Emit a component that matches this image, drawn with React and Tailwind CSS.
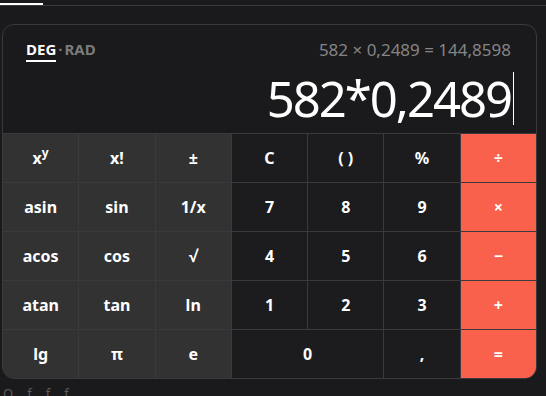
import React from "react";

const keys = [
  { t: "xy", k: "fn" },
  { t: "x!", k: "fn" },
  { t: "±", k: "fn" },
  { t: "C", k: "num" },
  { t: "( )", k: "num" },
  { t: "%", k: "num" },
  { t: "÷", k: "op" },
  { t: "asin", k: "fn" },
  { t: "sin", k: "fn" },
  { t: "1/x", k: "fn" },
  { t: "7", k: "num" },
  { t: "8", k: "num" },
  { t: "9", k: "num" },
  { t: "×", k: "op" },
  { t: "acos", k: "fn" },
  { t: "cos", k: "fn" },
  { t: "√", k: "fn" },
  { t: "4", k: "num" },
  { t: "5", k: "num" },
  { t: "6", k: "num" },
  { t: "−", k: "op" },
  { t: "atan", k: "fn" },
  { t: "tan", k: "fn" },
  { t: "ln", k: "fn" },
  { t: "1", k: "num" },
  { t: "2", k: "num" },
  { t: "3", k: "num" },
  { t: "+", k: "op" },
  { t: "lg", k: "fn" },
  { t: "π", k: "fn" },
  { t: "e", k: "fn" },
  { t: "0", k: "num", wide: true },
  { t: ",", k: "num" },
  { t: "=", k: "op" },
];

const Key = ({ item, last }) => {
  const bg =
    item.k === "fn" ? "bg-[#323232]" : item.k === "op" ? "bg-[#fa614c]" : "bg-[#1c1c1e]";
  return (
    <button
      className={`${bg} ${item.wide ? "col-span-2" : ""} ${
        last ? "rounded-br-[11px]" : ""
      } ${item.t === "lg" ? "rounded-bl-[11px]" : ""} flex items-center justify-center text-[16px] font-bold text-white`}
    >
      {item.t === "xy" ? (
        <span>
          x<sup className="text-[12px] top-[-7px]">y</sup>
        </span>
      ) : (
        item.t
      )}
    </button>
  );
};

export default function App() {
  return (
    <div
      className="w-[546px] h-[396px] overflow-hidden bg-[#1a1a1c] text-white"
      style={{ fontFamily: '"Noto Sans", "Open Sans", sans-serif' }}
    >
      <div className="h-[6px] border-b border-[#3a3a3c] flex items-end">
        <div className="w-[43px] h-[2px] bg-white" />
      </div>

      <div className="ml-[2px] mt-[18px] w-[535px] rounded-[12px] border border-[#3a3a3c] bg-[#1a1a1c]">
        <div className="h-[108px] pl-[23px] pr-[24px] pt-[17px] relative">
          <div className="flex items-start justify-between">
            <div className="flex items-center text-[15px] font-bold leading-none">
              <span className="border-b-2 border-white pb-[3px] text-white">DEG</span>
              <span className="text-[#7b7b7b] pb-[5px] mx-[2px]">·</span>
              <span className="text-[#7b7b7b] pb-[5px]">RAD</span>
            </div>
            <div className="text-[17px] leading-none text-[#858585] -mt-[1px] mr-[1px]">
              582 × 0,2489 = 144,8598
            </div>
          </div>
          <div className="flex justify-end items-center mt-[10px] -mr-[2px]">
            <span className="text-[49px] leading-none tracking-[-2px] text-white">
              582*0,2489
            </span>
            <span className="w-[1px] h-[53px] bg-white ml-[2px]" />
          </div>
        </div>
        <div className="grid grid-cols-7 grid-rows-[repeat(5,48px)] gap-px border-t border-[#3a3a3c] bg-[#3a3a3c] rounded-b-[11px]">
          {keys.map((item, i) => (
            <Key key={i} item={item} last={i === keys.length - 1} />
          ))}
        </div>
      </div>

      <div className="mt-[8px] flex gap-[14px] pl-[3px] text-[13px] text-[#5a5a5a] leading-none">
        <span>Q</span>
        <span>f</span>
        <span>f</span>
        <span>f</span>
      </div>
    </div>
  );
}
